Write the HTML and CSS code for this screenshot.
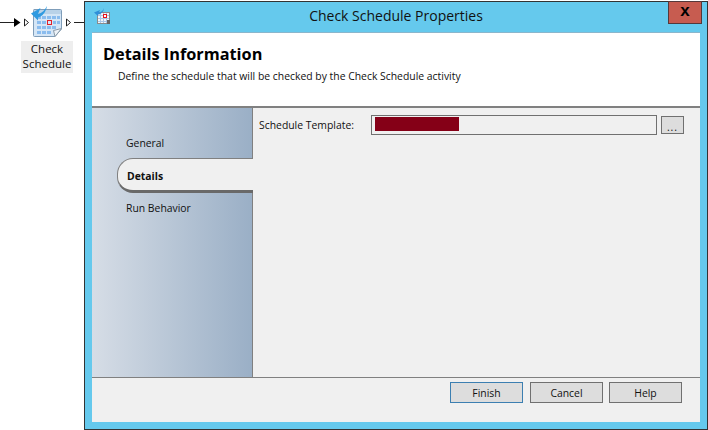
FILE: index.html
```html
<!DOCTYPE html>
<html lang="en">
  <head>
    <meta charset="UTF-8" />
    <title>Check Schedule Properties</title>
    <link rel="stylesheet" href="styles.css">
  </head>
  <body>
    <!-- Workflow canvas -->
    <div class="canvas">
      <div class="connector">
        <svg class="flow" width="84" height="41" viewBox="0 0 84 41">
          <path d="M0 22.500H14" stroke="#222" fill="none" />
          <path d="M14 18L20.500 22.500L14 27Z" fill="#000" />
          <path d="M24.500 19L28.500 22.500L24.500 26Z" fill="#fff" stroke="#222" />
          <path d="M66.500 19L70.500 22.500L66.500 26Z" fill="#fff" stroke="#222" />
          <path d="M74 22.500H84" stroke="#222" fill="none" />
          <path d="M34 9.500H60.500Q61.500 9.500 61.500 10.500V29L55 36.500H34.500Q33.500 36.500 33.500 35.500V10.500Q33.500 9.500 34 9.500Z" fill="#d5e6f6" stroke="#7f9db9" />
          <path d="M34 10H61V14H34Z" fill="#b9d2e8" />
          <g fill="#8abcee">
            <rect x="37" y="16" width="4" height="3" /><rect x="42" y="16" width="4" height="3" /><rect x="47" y="16" width="4" height="3" /><rect x="52" y="16" width="4" height="3" /><rect x="57" y="16" width="3" height="3" />
            <rect x="37" y="21" width="4" height="3" /><rect x="42" y="21" width="4" height="3" /><rect x="53" y="21" width="3" height="3" /><rect x="57" y="21" width="3" height="3" />
            <rect x="37" y="26" width="4" height="3" /><rect x="42" y="26" width="4" height="3" /><rect x="47" y="26" width="4" height="3" /><rect x="52" y="26" width="4" height="3" />
            <rect x="37" y="31" width="4" height="3" /><rect x="42" y="31" width="4" height="3" /><rect x="47" y="31" width="4" height="3" />
          </g>
          <rect x="47.500" y="20.500" width="4" height="4" fill="#d5e6f6" stroke="#e0202a" />
          <path d="M61.500 28.500L55 36.500L53.500 30.500Z" fill="#eef3f8" stroke="#8a9aa8" />
          <path d="M47 6C45 10 42 13 38 14L40.500 8L31 13.500L38 20.500L38 17.500C42 17 46 12 47 6Z" fill="#2f9ae0" />
        </svg>
      </div>
      <div class="node-label">Check Schedule</div>
    </div>

    <!-- Dialog -->
    <div class="dialog">
      <div class="titlebar">
        <svg class="app-icon" width="16" height="16" viewBox="0 0 16 16">
          <rect x="3.500" y="4.500" width="12" height="11" fill="#f2f5f8" stroke="#8a8a8a" />
          <path d="M4 7.500H15M4 10.500H15M4 13.500H15M6.500 5V15M9.500 5V15M12.500 5V15" stroke="#a9c6e6" fill="none" />
          <rect x="9.500" y="6.500" width="3" height="3" fill="#fff" stroke="#e8121a" />
          <path d="M10 0C9 3 7 4 5 4.500L6 2L0 4.500L4 8L4 6.500C7 6.500 9.500 4 10 0Z" fill="#2f8fd8" />
          <rect x="13" y="12" width="3" height="4" fill="#666" />
        </svg>
        <span class="title">Check Schedule Properties</span>
        <button class="close">x</button>
      </div>
      <div class="body">
        <div class="header">
          <h1>Details Information</h1>
          <p>Define the schedule that will be checked by the Check Schedule activity</p>
        </div>
        <div class="main">
          <div class="sidebar">
            <div class="tab">General</div>
            <div class="tab active">Details</div>
            <div class="tab">Run Behavior</div>
          </div>
          <div class="content">
            <label class="field-label">Schedule Template:</label>
            <div class="field"><span class="redacted"></span></div>
            <button class="btn browse">...</button>
          </div>
        </div>
        <div class="footer">
          <button class="btn primary">Finish</button>
          <button class="btn">Cancel</button>
          <button class="btn">Help</button>
        </div>
      </div>
    </div>
  </body>
</html>
```

FILE: styles.css
```css
* {
  margin: 0;
  padding: 0;
  box-sizing: border-box;
}

body,
html {
  height: 100%;
  overflow: hidden;
  background: #fff;
  font-family: "Open Sans", "Noto Sans", sans-serif;
  font-size: 10.400px;
  color: #111;
}

body {
  display: flex;
  width: 708px;
  height: 430px;
}

button {
  font: inherit;
  color: inherit;
}

/* Workflow canvas */
.canvas {
  width: 84px;
  flex: none;
}

.flow {
  display: block;
}

.node-label {
  margin: 0 11px 0 21px;
  height: 32px;
  background: #eee;
  text-align: center;
  font-size: 11.500px;
  line-height: 15px;
}

/* Dialog */
.dialog {
  width: 624px;
  height: 429px;
  margin-top: 1px;
  display: flex;
  flex-direction: column;
  background: #65c9ed;
  border: 1px solid #333;
  padding: 0 7px 7px;
}

.titlebar {
  height: 30px;
  flex: none;
  display: flex;
  align-items: center;
  position: relative;
  padding-left: 2px;
}

.app-icon {
  flex: none;
  margin-top: -2px;
}

.title {
  flex: 1;
  text-align: center;
  font-size: 14px;
  margin: -4px 0 0 -19px;
  padding-left: 1px;
}

.close {
  position: absolute;
  top: -1px;
  right: -2px;
  width: 34px;
  height: 23px;
  background: #c75c50;
  border: 1px solid #55383a;
  font-family: "Liberation Sans", sans-serif;
  font-weight: 700;
  font-size: 17px;
  line-height: 13px;
  padding-bottom: 4px;
  color: #000;
}

.body {
  flex: 1;
  display: flex;
  flex-direction: column;
  background: #f0f0f0;
  border-top: 1px solid #8ab6cc;
}

.header {
  height: 75px;
  flex: none;
  background: #fff;
  border-bottom: 2px solid #808080;
  padding: 10px 0 0 11px;
}

h1 {
  font-size: 16.300px;
  line-height: 22px;
  font-weight: 700;
  color: #000;
}

p {
  margin: 4px 0 0 15px;
  line-height: 15px;
}

.main {
  flex: 1;
  display: flex;
  min-height: 0;
}

.sidebar {
  width: 161px;
  flex: none;
  background: linear-gradient(to right, #d6dde6, #9aafc6);
  border-right: 1px solid #808080;
  padding-top: 26px;
}

.tab {
  height: 16px;
  line-height: 18px;
  margin-left: 34px;
}

.tab.active {
  height: 35px;
  line-height: 34px;
  margin: 8px -1px 6px 25px;
  padding-left: 9px;
  background: #f0f0f0;
  font-weight: 700;
  border: 1px solid #808080;
  border-bottom: 3px solid #696969;
  border-right: none;
  border-radius: 16px 0 0 16px;
}

.content {
  flex: 1;
  display: flex;
  align-items: flex-start;
  padding: 7px 16px 0 6px;
}

.field-label {
  width: 112px;
  flex: none;
  line-height: 20px;
}

.field {
  width: 286px;
  height: 20px;
  flex: none;
  background: #f0f0f0;
  border: 1px solid #707070;
  padding: 1px 3px;
}

.redacted {
  display: block;
  width: 84px;
  height: 14px;
  background: #850017;
}

.btn {
  width: 73px;
  height: 21px;
  background: #ddd;
  border: 1px solid #707070;
}

.btn.primary {
  border-color: #3c7fb1;
}

.browse {
  width: 23px;
  height: 18px;
  margin: 1px 0 0 4px;
  padding-top: 4px;
  line-height: 12px;
  letter-spacing: 1px;
}

.footer {
  height: 45px;
  flex: none;
  border-top: 1px solid #808080;
  display: flex;
  justify-content: flex-end;
  gap: 6px;
  padding: 4px 18px 0 0;
}

.footer .btn.primary {
  margin-right: 1px;
}
```
